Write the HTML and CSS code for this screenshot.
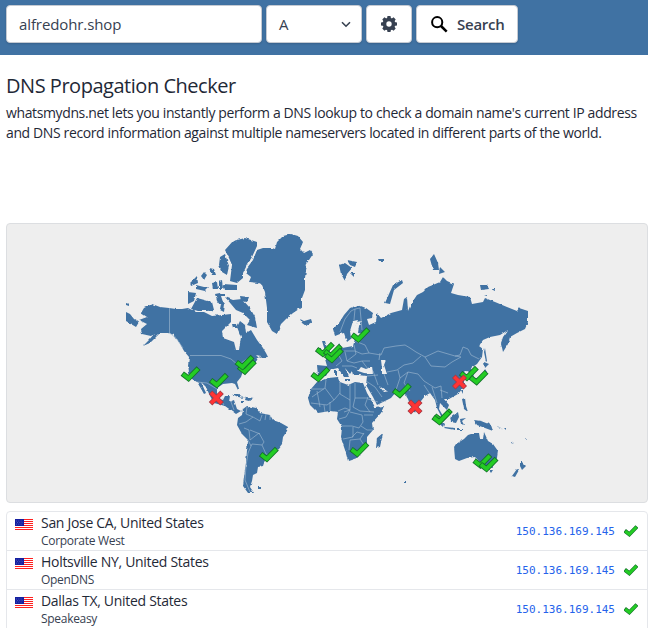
FILE: index.html
```html
<!DOCTYPE html>
<html lang="en">
<head>
<meta charset="utf-8">
<title>DNS Propagation Checker</title>
<link rel="stylesheet" href="styles.css">
</head>
<body>
<svg class="defs" width="0" height="0" aria-hidden="true">
  <defs>
    <symbol id="check" viewBox="-9 -8 18 16" overflow="visible">
      <path d="M-6.3 1.2L-2.2 4.4L6 -4" fill="none" stroke="#14702b" stroke-width="5.4" stroke-linecap="square"/>
      <path d="M-6.3 1.2L-2.2 4.4L6 -4" fill="none" stroke="#24cc24" stroke-width="3.7" stroke-linecap="square"/>
    </symbol>
    <symbol id="cross" viewBox="-8 -8 16 16" overflow="visible">
      <path d="M-4 -4L4 4M4 -4L-4 4" fill="none" stroke="#a33a45" stroke-width="5" stroke-linecap="square"/>
      <path d="M-4 -4L4 4M4 -4L-4 4" fill="none" stroke="#ff3434" stroke-width="3.5" stroke-linecap="square"/>
    </symbol>
    <symbol id="flag" viewBox="0 0 18 12">
      <path fill="#fff" d="M0 0h18v12H0z"/>
      <path fill="#ff2020" shape-rendering="crispEdges" d="M0 0h18v1H0zM0 2h18v1H0zM0 4h18v1H0zM0 6h18v1H0zM0 8h18v1H0zM0 10h18v1H0z"/>
      <path fill="#1520a0" d="M0 0h9v7H0z"/>
      <path stroke="#6d7bd0" stroke-width=".6" stroke-dasharray="1 1.3" d="M1 2h7M2 3.6h6M1 5.2h7"/>
    </symbol>
    <filter id="coast" x="0" y="0" width="100%" height="100%">
      <feTurbulence type="fractalNoise" baseFrequency=".22" numOctaves="2" seed="4" result="n"/>
      <feDisplacementMap in="SourceGraphic" in2="n" scale="2.6" xChannelSelector="R" yChannelSelector="G"/>
    </filter>
  </defs>
</svg>

<header class="bar">
  <div class="box domain">alfredohr.shop</div>
  <div class="box type"><span>A</span>
    <svg width="10" height="7" viewBox="0 0 10 7"><path d="M1 1.2L5 5.2L9 1.2" fill="none" stroke="#374151" stroke-width="1.6"/></svg>
  </div>
  <div class="box gear">
    <svg width="16" height="16" viewBox="0 0 16 16"><g fill="#374151"><circle cx="8" cy="8" r="6.3"/><path id="tooth" d="M6.500 0h3l.6 3h-4.200zM6.500 16h3l.6-3h-4.200zM0 6.500v3l3 .6V5.900zM16 6.500v3l-3 .6V5.900z"/><use href="#tooth" transform="rotate(45 8 8)"/></g><circle cx="8" cy="8" r="2.7" fill="#fff"/></svg>
  </div>
  <div class="box search">
    <svg width="17" height="17" viewBox="0 0 17 17" fill="none" stroke="#000"><circle cx="6.2" cy="6.2" r="5.1" stroke-width="2"/><path d="M10 10L15.700 15.700" stroke-width="2.5"/></svg>
    <span>Search</span>
  </div>
</header>

<main>
  <h1>DNS Propagation Checker</h1>
  <p class="intro"><span>whatsmydns.net lets you instantly perform a DNS lookup to check a domain name's current IP address</span><br><span>and DNS record information against multiple nameservers located in different parts of the world.</span></p>

  <section class="map">
    <svg width="640" height="278" viewBox="7 224 640 278">
      <g fill="#4072a3" filter="url(#coast)">
        <!-- North America -->
        <path d="M126 312L130 314L134 319L139 322L136 327L131 324L126 321ZM126 303l3 1v2l-3-1z"/>
        <path d="M152 304L144 308L141 313L147 317L139 320L147 324L141 329L142 334L151 336L154 334L149 340L143 346L150 343L157 336L160 333L169 333L174 335L179 342L184 351L189 357L188 365L189 373L192 379L197 382L200 387L204 394L206 393L201 382L206 387L210 396L214 403L225 406L232 411L236 414L241 411L237 409L234 400L229 402L230 396L225 396L223 400L219 399L217 394L217 388L223 384L232 383L235 384L238 390L239 389L237 382L241 377L243 371L250 365L255 362L257 358L268 357L266 353L263 348L257 340L251 330L246 333L245 325L240 321L237 327L241 337L239 350L236 350L234 342L223 338L222 331L231 322L231 314L222 315L212 316L204 312L196 312L188 308L182 309L176 309L169 308L160 307Z"/>
        <path d="M225 297L233 300L242 299L250 308L255 317L257 328L247 325L250 320L243 313L236 310L231 304Z"/>
        <path d="M197 298L212 302L214 310L207 311L198 311L191 309ZM188 292L196 293L194 301L188 304ZM215 294l5-1 3 9-3 3-3-4zM222 300l3 4-1 8-4-2zM190 283l7-7 1 7-7 3zM196 285l8 2 5 0-4 4-9-2zM201 276l3-4 3 3-3 5zM209 268l5 1 2 6-4 0zM212 283l5-1 1 7-5 0zM219 281l3-1 1 9-4 0zM232 324l5 0 1 4-5 0zM240 296l9 1-2 5-6-1zM218 294l7 0 0 2-6 0z"/>
        <path d="M233 241L245 238L257 242L257 246L252 257L247 265L243 273L243 278L237 283L230 281L232 265L229 258L225 250ZM220 257L225 254L229 266L227 275L222 272L219 265ZM223 284L237 285L237 290L225 290Z"/>
        <path d="M232 394L238 394L245 398L238 397ZM246 397l7 1-4 3-4-1zM241 401h3v2h-3z"/>
        <!-- Greenland and the north Atlantic -->
        <path d="M247 268L253 260L257 250L263 248L272 248L275 249L277 242L283 236L291 234L298 236L303 242L300 249L304 253L310 250L313 254L307 263L305 278L305 290L302 298L302 307L293 313L286 319L281 324L277 334L272 331L267 322L267 308L265 292L262 285L258 283L249 282L251 277L246 273Z"/>
        <path d="M300 319L304 321L311 319L312 322L306 326L302 323ZM339 265L345 263L352 268L347 274L345 281L341 274ZM347 260L357 262L355 267L350 265ZM350 273h4v4z"/>
        <!-- South America -->
        <path d="M242 415L243 409L247 406L256 408L260 413L270 415L273 420L281 423L288 427L287 431L283 437L282 444L279 448L273 452L270 458L265 460L263 466L258 467L257 473L253 475L252 481L250 487L254 493L248 493L243 486L244 477L246 463L247 450L248 440L242 434L237 425L238 418ZM258 486h4v2h-4z"/>
        <!-- Africa -->
        <path d="M317 382L328 378L338 377L340 382L348 385L355 382L363 383L367 393L375 407L384 406L381 413L372 423L373 430L367 437L367 443L364 450L357 458L348 461L345 450L341 438L342 427L337 419L338 412L330 411L318 413L310 405L308 398L311 389ZM383 433L380 447L376 448L377 438Z"/>
        <!-- Europe and Asia -->
        <path d="M318 376L317 365L327 366L325 359L329 356L338 352L339 343L342 348L353 346L355 339L359 336L366 334L358 333L359 326L361 321L357 322L353 330L352 338L347 342L344 333L340 334L335 336L333 329L339 323L344 315L350 308L358 305L366 308L373 313L372 318L367 319L369 325L376 322L377 313L381 318L391 313L402 310L404 299L407 297L408 311L411 304L417 295L423 292L428 287L440 282L443 277L447 281L454 284L451 293L458 295L470 297L472 304L483 302L485 298L495 302L507 307L517 311L519 308L528 311L528 322L525 329L517 333L510 337L508 344L503 352L501 343L503 337L508 330L500 335L490 337L483 340L479 346L483 349L482 357L477 364L471 368L474 377L471 376L468 371L463 373L460 374L464 379L464 387L458 394L449 399L444 399L449 405L447 410L440 403L439 409L443 416L441 416L437 408L435 400L430 393L425 396L421 401L417 407L415 413L411 407L408 399L405 394L397 395L387 391L379 386L384 392L390 391L396 392L391 398L377 405L373 397L366 385L367 376L359 375L353 375L352 371L350 374L345 368L349 377L344 377L338 368L329 370L326 376Z"/>
        <path d="M322 341l3 0 2 7 4 5-8 2 2-4zM317 348l4 0 0 5-4 0zM334 370h3v6h-3zM345 379h5v2h-5zM385 303l8-18 9-5 1 3-9 7-4 14zM378 259h6v2h-5zM430 259L434 254L438 263L439 270L433 270ZM440 267l5 5-6 2zM480 285l7 0 2 4-8 1zM491 289h4v2zM484 295h3v1z"/>
        <!-- Japan, Indonesia, Oceania -->
        <path d="M485 348l2 13-1 1-2-10zM484 362l5 2-4 4zM485 369l2 3-3 6-9 3-1-2 8-3zM461 390h2v4zM462 399l3-1 1 8 2 6-4-3zM418 410l2 3-2 1z"/>
        <path d="M435 415L445 424L444 427L436 420ZM445 427L455 428L455 430L444 428ZM450 418L458 412L459 417L456 423L451 422ZM460 419l6-1-4 3 2 4-3-1zM457 429l6 0 0 1-6 0zM474 420L481 421L491 425L493 431L485 428L477 425Z"/>
        <path d="M454 447L456 444L464 439L468 435L474 433L479 433L480 439L483 439L484 432L488 441L493 444L498 451L497 458L492 468L486 467L480 462L475 457L467 458L459 461L455 459ZM489 470l4 0-2 3zM520 460l6 6-4 4-2-4zM519 470l-4 7-3-1 5-7z"/>
        <path d="M497 426l6 3-5-2zM504 428h2v2zM511 443l3 1-3-2zM525 438h2v2zM404 482h2v1h-2zM237 394h3v1z"/>
      </g>
      <g fill="#eee" filter="url(#coast)">
        <path d="M358 371L361 367L366 369L372 366L373 374L364 373ZM381 360L386 360L384 365L387 374L382 374L382 368ZM256 355l5 1-2 2zM353 321l5-1-4 10-3 8-1-7z"/>
      </g>
      <g fill="none" stroke="#9cb7cf" stroke-width=".65">
        <path d="M169.500 308V333L176 338L183 348M190 355.500H221L231 359L238 365L250 357M197 382L207 383L217 389M221 400l3 5M231 402l3 8"/>
        <path d="M247 407L246 414L253 417L260 421L262 415M266 414l-1 6M270 415v5M239 424L246 422L253 417M244 428L249 430L250 440L259 433L264 442L262 445L252 444L248 453L246 466L245 480L250 492M262 445L266 454L270 455M248 440L251 446M250 430L260 434"/>
        <path d="M340 332L345 319L351 311L355 309L354 320M355 309L360 308L362 330M355 341L365 345L369 353L362 354L355 351L344 351M345 352L347 361L354 363L362 361L370 361M354 345L356 354L347 361M338 354L342 361L336 366M342 366L352 366L357 368M362 361L368 369M369 353L381 355L384 348L396 346L405 345L410 348L416 352L425 357L438 351L455 356L460 355L463 347L468 349L471 355L479 359M425 357L431 366L445 367L452 362L461 357L455 356M380 353L379 360M387 372L397 370L404 365L413 363L421 356M384 374L388 385M398 370L400 378L408 372L418 374L424 381L435 388L441 386L442 398M400 378L395 393M408 372L404 383L410 391M424 385L430 394M440 390L448 393M432 387L437 403M366 381L375 387L382 397M373 371L378 385M367 376L378 375"/>
        <path d="M326 380L325 388L312 397M325 388L334 400L327 405L311 403M340 382L340 394L350 400V384M340 393L334 400M350 400V410L344 412M355 383V398H368M355 398L353 407L360 411L374 412M311 389H324M317 391L320 407M324 405L325 412M330 402V411M338 411L345 408L350 410M350 410L346 417L339 419M350 412L362 415L363 422L359 428L352 426L342 426M353 427V437L343 439M361 426L367 430L373 430M352 437L357 432L364 434M349 450L350 440L360 439L364 445M360 439L364 433M364 415H373M368 397L365 405L370 412M368 399L378 402"/>
      </g>
      <g>
        <use href="#check" x="181.700" y="366" width="18" height="16"/>
        <use href="#check" x="210" y="372.500" width="18" height="16"/>
        <use href="#check" x="238" y="359.200" width="18" height="16"/>
        <use href="#check" x="235.700" y="354.500" width="18" height="16"/>
        <use href="#check" x="260" y="446.500" width="18" height="16"/>
        <use href="#check" x="316" y="341.500" width="18" height="16"/>
        <use href="#check" x="324" y="343.500" width="18" height="16"/>
        <use href="#check" x="325" y="347.500" width="18" height="16"/>
        <use href="#check" x="311.500" y="366.500" width="18" height="16"/>
        <use href="#check" x="351.500" y="327" width="18" height="16"/>
        <use href="#check" x="350.500" y="441.500" width="18" height="16"/>
        <use href="#check" x="393" y="382.700" width="18" height="16"/>
        <use href="#check" x="460" y="365.500" width="18" height="16"/>
        <use href="#check" x="469.700" y="369.700" width="18" height="16"/>
        <use href="#check" x="434" y="408" width="18" height="16"/>
        <use href="#check" x="432.500" y="409.500" width="18" height="16"/>
        <use href="#check" x="473.500" y="453" width="18" height="16"/>
        <use href="#check" x="479.700" y="456.500" width="18" height="16"/>
        <use href="#cross" x="208.300" y="390" width="16" height="16"/>
        <use href="#cross" x="407" y="399" width="16" height="16"/>
        <use href="#cross" x="451.500" y="374" width="16" height="16"/>
      </g>
    </svg>
  </section>

  <section class="results">
    <div class="row"><svg class="flag" width="18" height="12"><use href="#flag"/></svg><div class="place"><div class="city">San Jose CA, United States</div><div class="isp">Corporate West</div></div><span class="ip">150.136.169.145</span><svg class="tick" width="14" height="12" viewBox="-9 -8 18 16"><use href="#check" x="-9" y="-8" width="18" height="16"/></svg></div>
    <div class="row"><svg class="flag" width="18" height="12"><use href="#flag"/></svg><div class="place"><div class="city">Holtsville NY, United States</div><div class="isp">OpenDNS</div></div><span class="ip">150.136.169.145</span><svg class="tick" width="14" height="12" viewBox="-9 -8 18 16"><use href="#check" x="-9" y="-8" width="18" height="16"/></svg></div>
    <div class="row"><svg class="flag" width="18" height="12"><use href="#flag"/></svg><div class="place"><div class="city">Dallas TX, United States</div><div class="isp">Speakeasy</div></div><span class="ip">150.136.169.145</span><svg class="tick" width="14" height="12" viewBox="-9 -8 18 16"><use href="#check" x="-9" y="-8" width="18" height="16"/></svg></div>
  </section>
</main>
</body>
</html>
```
FILE: styles.css
```css
* { box-sizing: border-box; }
html { overflow: hidden; }
body {
  margin: 0;
  height: 628px;
  overflow: hidden;
  background: #fff;
  color: #1f2937;
  font-family: "Open Sans", "Noto Sans", sans-serif;
}
svg { display: block; flex: none; }
.defs { height: 0; }
.bar {
  display: flex;
  gap: 4px;
  height: 55px;
  padding: 5px 6px 12px;
  background: #4072a3;
}
.box {
  display: flex;
  align-items: center;
  height: 38px;
  border: 1px solid #c5cad2;
  border-radius: 4px;
  background: #fff;
  color: #374151;
  font-size: 15px;
  box-shadow: 0 1px 2px rgba(0, 0, 0, .15);
}
.domain { width: 256px; padding-left: 12px; letter-spacing: -.1px; }
.type { width: 96px; padding: 0 10px 0 12px; justify-content: space-between; }
.gear { width: 46px; justify-content: center; }
.search { width: 102px; padding-left: 14px; gap: 9px; font-weight: 600; letter-spacing: -.25px; }
main { padding-left: 6px; }
h1 {
  margin: 17px 0 0;
  font-size: 20px;
  line-height: 28px;
  font-weight: 400;
  letter-spacing: -.47px;
  white-space: nowrap;
}
.intro {
  margin: 3px 0 80px;
  font-size: 14px;
  line-height: 20px;
  white-space: nowrap;
  letter-spacing: -.376px;
}
.map {
  height: 280px;
  border: 1px solid #dcdee1;
  border-radius: 4px;
  background: #eee;
}
.results {
  margin-top: 8px;
  border: 1px solid #e5e7eb;
  border-radius: 4px 4px 0 0;
}
.row {
  display: flex;
  height: 39px;
  padding: 0 9px 0 8px;
  border-bottom: 1px solid #e5e7eb;
}
.flag { margin-top: 7px; }
.place { flex: 1; margin-left: 8px; white-space: nowrap; }
.city { margin-top: 1px; font-size: 14px; line-height: 20px; letter-spacing: -.3px; }
.isp { margin-top: 1px; font-size: 12px; line-height: 14px; color: #374151; letter-spacing: -.3px; }
.ip {
  font: 11px/40px "DejaVu Sans Mono", monospace;
  color: #2563eb;
}
.tick { margin: 13px 0 0 9px; }
```
